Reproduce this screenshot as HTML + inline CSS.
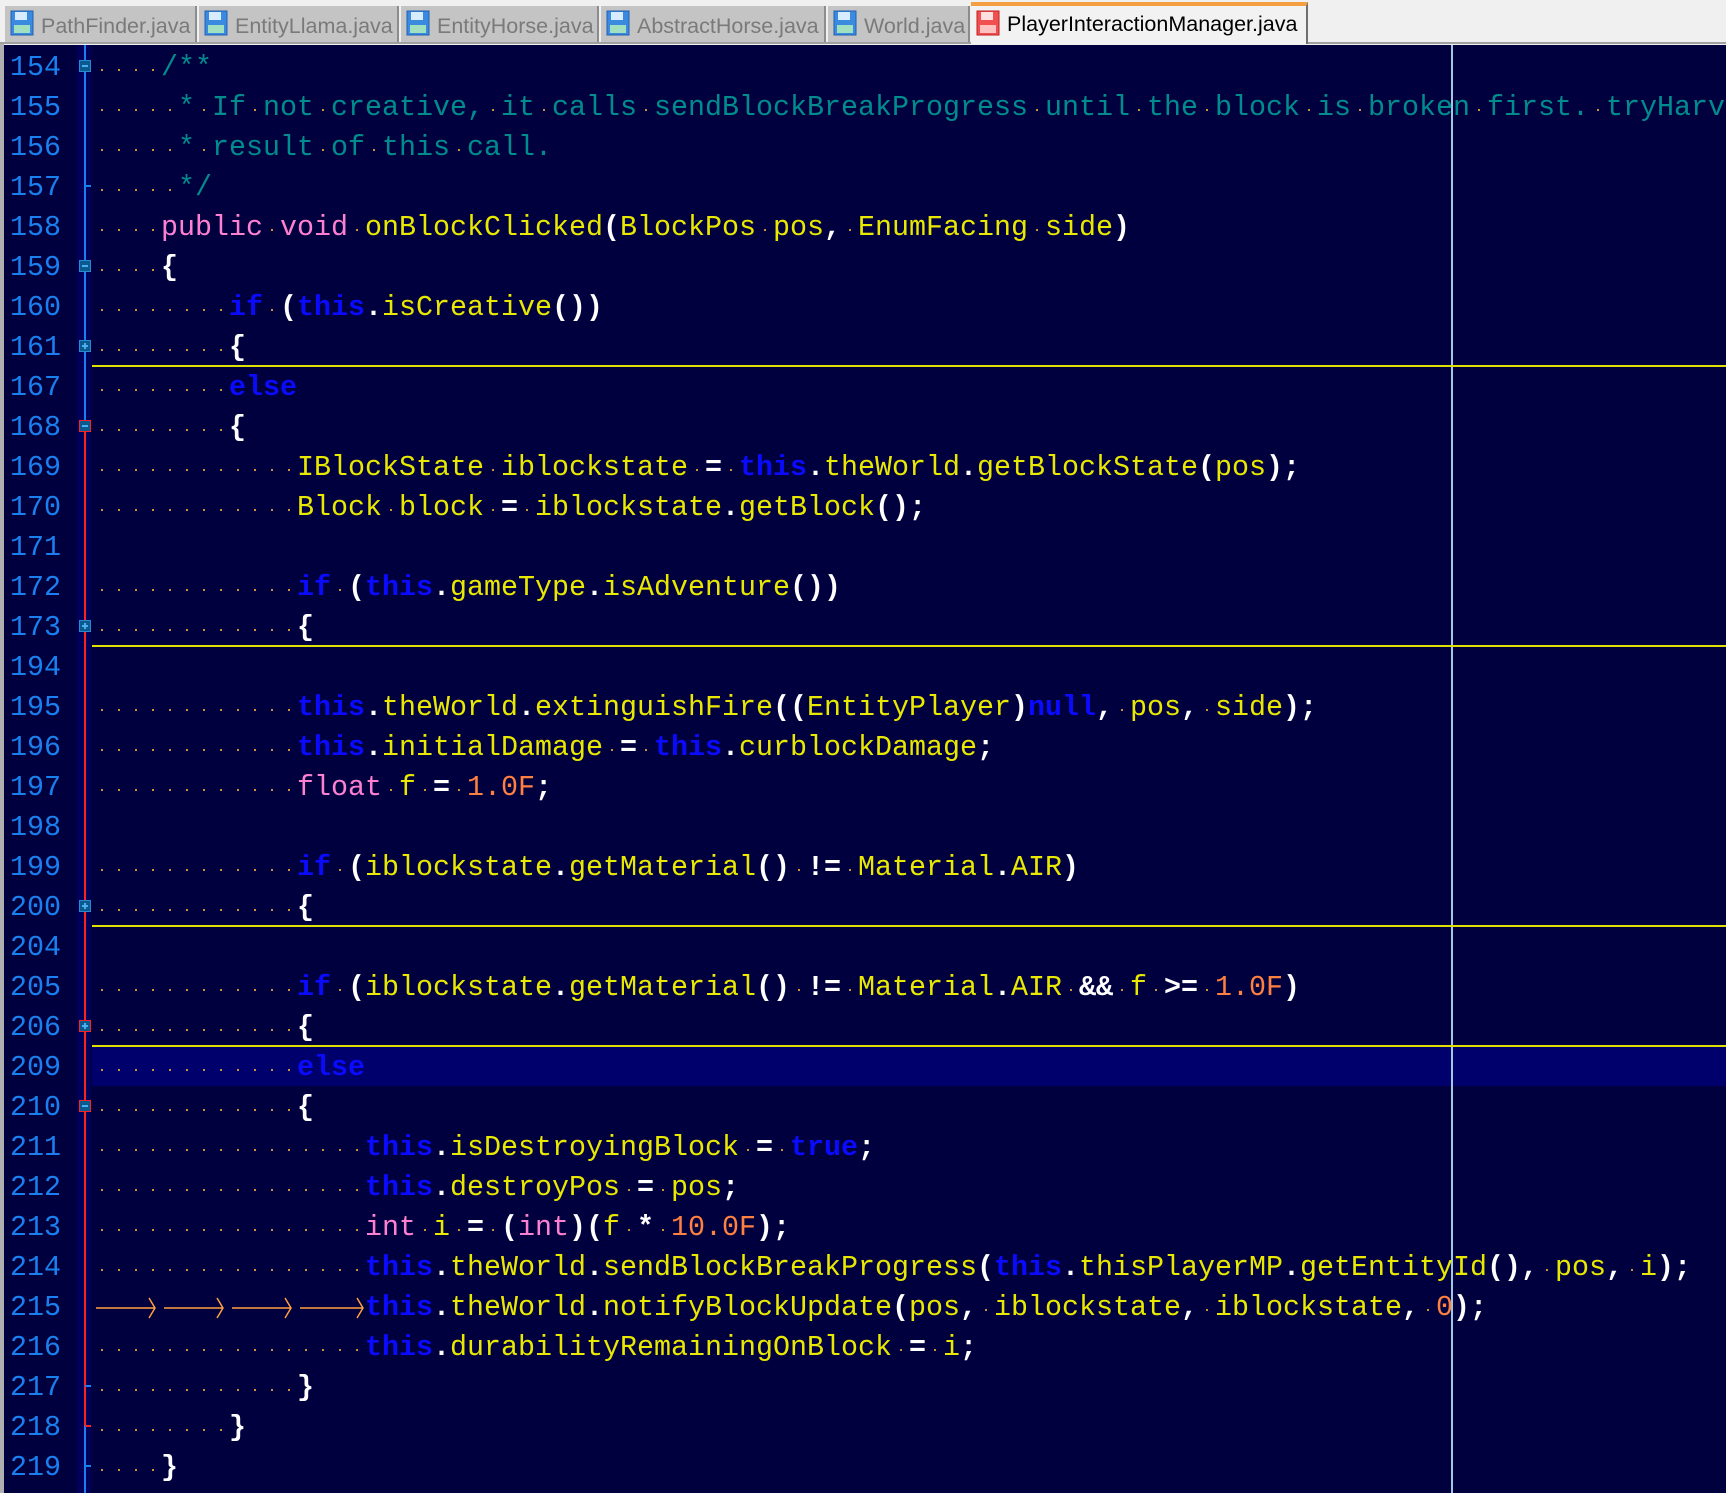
<!DOCTYPE html>
<html><head><meta charset="utf-8"><style>
*{margin:0;padding:0;box-sizing:border-box}
body{width:1726px;height:1493px;overflow:hidden;background:#f0f0f0;position:relative;font-family:"Liberation Mono",monospace}
#tabs{position:absolute;left:0;top:0;width:1726px;height:44px;background:#f0f0f0;border-bottom:2px solid #a0a0a0}
.tab{position:absolute;top:6px;height:36px;background:#c4c4c4;border-right:2px solid #8c8c8c;font-family:"Liberation Sans",Arial,sans-serif;font-size:21.5px;color:#7a7a7a;line-height:40px;padding-left:36px;white-space:nowrap;overflow:hidden}
.tab svg{position:absolute;left:5px;top:4px}
.tab.act{top:2px;height:42px;background:#f2f2f2;color:#000;border-top:4px solid #f4a040;border-right:2px solid #707070;line-height:36px}
.tab.act svg{top:4px}
#ed{position:absolute;left:4px;top:45px;width:1722px;height:1448px;background:#00003e;overflow:hidden}
#lb{position:absolute;left:0;top:44px;width:4px;height:1449px;background:#b0b0b0}
#gut{position:absolute;left:77px;top:45px;width:14px;height:1448px;background:#00005a}
.vl{position:absolute;left:84px;width:2px}
.row{position:absolute;left:0;margin-top:2px;height:40px;width:1726px;line-height:40px;font-size:28.33px;white-space:pre;color:#e8e800}
.ln{position:absolute;left:10px;color:#1a80f0}
.code{position:absolute;left:93px;width:1633px;overflow:hidden}
u{display:inline-block;width:17px;height:10px;position:relative;text-decoration:none}
u::after{content:"";position:absolute;left:8px;top:4px;width:2px;height:2px;background:#d09040}
.k{color:#0a0aff;font-weight:bold}
.t{color:#ff80d0}
.w{color:#fff;font-weight:bold}
.c{color:#008c8c}
.n{color:#ff8040}
.sep{position:absolute;left:92px;width:1634px;height:2px;background:#e0e000}
.cur{position:absolute;left:92px;width:1634px;height:40px;background:#00006c}
.mk{position:absolute;left:79px;width:12px;height:12px;background:#0a5a90;border:1px solid #2a8ad0}
.mk.r{border-color:#ff2020}
.mk::after{content:"";position:absolute;left:2px;top:4px;width:6px;height:2px;background:#4ab0f0}
.mk.p::before{content:"";position:absolute;left:4px;top:2px;width:2px;height:6px;background:#4ab0f0}
.tk{position:absolute;left:85px;width:6px;height:2px;background:#1a80f0}
</style></head><body>
<div id="tabs">
<div class="tab" style="left:5px;width:192px"><svg width="24" height="26" viewBox="0 0 24 26"><rect x="1" y="1" width="22" height="24" fill="#3a8ae0" stroke="#2060b0"/><rect x="5" y="2" width="12" height="8" fill="#d8ecff"/><rect x="4" y="15" width="16" height="8" fill="#a0e0c0"/></svg>PathFinder.java</div>
<div class="tab" style="left:199px;width:200px"><svg width="24" height="26" viewBox="0 0 24 26"><rect x="1" y="1" width="22" height="24" fill="#3a8ae0" stroke="#2060b0"/><rect x="5" y="2" width="12" height="8" fill="#d8ecff"/><rect x="4" y="15" width="16" height="8" fill="#a0e0c0"/></svg>EntityLlama.java</div>
<div class="tab" style="left:401px;width:198px"><svg width="24" height="26" viewBox="0 0 24 26"><rect x="1" y="1" width="22" height="24" fill="#3a8ae0" stroke="#2060b0"/><rect x="5" y="2" width="12" height="8" fill="#d8ecff"/><rect x="4" y="15" width="16" height="8" fill="#a0e0c0"/></svg>EntityHorse.java</div>
<div class="tab" style="left:601px;width:225px"><svg width="24" height="26" viewBox="0 0 24 26"><rect x="1" y="1" width="22" height="24" fill="#3a8ae0" stroke="#2060b0"/><rect x="5" y="2" width="12" height="8" fill="#d8ecff"/><rect x="4" y="15" width="16" height="8" fill="#a0e0c0"/></svg>AbstractHorse.java</div>
<div class="tab" style="left:828px;width:142px"><svg width="24" height="26" viewBox="0 0 24 26"><rect x="1" y="1" width="22" height="24" fill="#3a8ae0" stroke="#2060b0"/><rect x="5" y="2" width="12" height="8" fill="#d8ecff"/><rect x="4" y="15" width="16" height="8" fill="#a0e0c0"/></svg>World.java</div>
<div class="tab act" style="left:971px;width:337px"><svg width="24" height="26" viewBox="0 0 24 26"><rect x="1" y="1" width="22" height="24" fill="#f05050" stroke="#c02020"/><rect x="5" y="2" width="12" height="8" fill="#ffe0e0"/><rect x="4" y="15" width="16" height="8" fill="#ffc0c0"/></svg>PlayerInteractionManager.java</div>
</div>
<div id="lb"></div>
<div id="ed"></div>
<div id="gut"></div>
<div class="vl" style="top:45px;height:380px;background:#1a80f0"></div>
<div class="vl" style="top:425px;height:1000px;background:#ff2020"></div>
<div class="vl" style="top:1425px;height:68px;background:#1a80f0"></div>

<div class="cur" style="top:1046px"></div>
<div style="position:absolute;left:1451px;top:45px;width:2px;height:1448px;background:#9cc8e0"></div>

<div class="sep" style="top:365px"></div>
<div class="sep" style="top:645px"></div>
<div class="sep" style="top:925px"></div>
<div class="sep" style="top:1045px"></div>

<div class="row" style="top:46px"><span class="ln">154</span><span class="code"><u></u><u></u><u></u><u></u><span class="c">/**</span></span></div>
<div class="row" style="top:86px"><span class="ln">155</span><span class="code"><u></u><u></u><u></u><u></u><u></u><span class="c">*<u></u>If<u></u>not<u></u>creative,<u></u>it<u></u>calls<u></u>sendBlockBreakProgress<u></u>until<u></u>the<u></u>block<u></u>is<u></u>broken<u></u>first.<u></u>tryHarvestBlock</span></span></div>
<div class="row" style="top:126px"><span class="ln">156</span><span class="code"><u></u><u></u><u></u><u></u><u></u><span class="c">*<u></u>result<u></u>of<u></u>this<u></u>call.</span></span></div>
<div class="row" style="top:166px"><span class="ln">157</span><span class="code"><u></u><u></u><u></u><u></u><u></u><span class="c">*/</span></span></div>
<div class="row" style="top:206px"><span class="ln">158</span><span class="code"><u></u><u></u><u></u><u></u><span class="t">public</span><u></u><span class="t">void</span><u></u>onBlockClicked<span class="w">(</span>BlockPos<u></u>pos<span class="w">,</span><u></u>EnumFacing<u></u>side<span class="w">)</span></span></div>
<div class="row" style="top:246px"><span class="ln">159</span><span class="code"><u></u><u></u><u></u><u></u><span class="w">{</span></span></div>
<div class="row" style="top:286px"><span class="ln">160</span><span class="code"><u></u><u></u><u></u><u></u><u></u><u></u><u></u><u></u><span class="k">if</span><u></u><span class="w">(</span><span class="k">this</span><span class="w">.</span>isCreative<span class="w">())</span></span></div>
<div class="row" style="top:326px"><span class="ln">161</span><span class="code"><u></u><u></u><u></u><u></u><u></u><u></u><u></u><u></u><span class="w">{</span></span></div>
<div class="row" style="top:366px"><span class="ln">167</span><span class="code"><u></u><u></u><u></u><u></u><u></u><u></u><u></u><u></u><span class="k">else</span></span></div>
<div class="row" style="top:406px"><span class="ln">168</span><span class="code"><u></u><u></u><u></u><u></u><u></u><u></u><u></u><u></u><span class="w">{</span></span></div>
<div class="row" style="top:446px"><span class="ln">169</span><span class="code"><u></u><u></u><u></u><u></u><u></u><u></u><u></u><u></u><u></u><u></u><u></u><u></u>IBlockState<u></u>iblockstate<u></u><span class="w">=</span><u></u><span class="k">this</span><span class="w">.</span>theWorld<span class="w">.</span>getBlockState<span class="w">(</span>pos<span class="w">);</span></span></div>
<div class="row" style="top:486px"><span class="ln">170</span><span class="code"><u></u><u></u><u></u><u></u><u></u><u></u><u></u><u></u><u></u><u></u><u></u><u></u>Block<u></u>block<u></u><span class="w">=</span><u></u>iblockstate<span class="w">.</span>getBlock<span class="w">();</span></span></div>
<div class="row" style="top:526px"><span class="ln">171</span></div>
<div class="row" style="top:566px"><span class="ln">172</span><span class="code"><u></u><u></u><u></u><u></u><u></u><u></u><u></u><u></u><u></u><u></u><u></u><u></u><span class="k">if</span><u></u><span class="w">(</span><span class="k">this</span><span class="w">.</span>gameType<span class="w">.</span>isAdventure<span class="w">())</span></span></div>
<div class="row" style="top:606px"><span class="ln">173</span><span class="code"><u></u><u></u><u></u><u></u><u></u><u></u><u></u><u></u><u></u><u></u><u></u><u></u><span class="w">{</span></span></div>
<div class="row" style="top:646px"><span class="ln">194</span></div>
<div class="row" style="top:686px"><span class="ln">195</span><span class="code"><u></u><u></u><u></u><u></u><u></u><u></u><u></u><u></u><u></u><u></u><u></u><u></u><span class="k">this</span><span class="w">.</span>theWorld<span class="w">.</span>extinguishFire<span class="w">((</span>EntityPlayer<span class="w">)</span><span class="k">null</span><span class="w">,</span><u></u>pos<span class="w">,</span><u></u>side<span class="w">);</span></span></div>
<div class="row" style="top:726px"><span class="ln">196</span><span class="code"><u></u><u></u><u></u><u></u><u></u><u></u><u></u><u></u><u></u><u></u><u></u><u></u><span class="k">this</span><span class="w">.</span>initialDamage<u></u><span class="w">=</span><u></u><span class="k">this</span><span class="w">.</span>curblockDamage<span class="w">;</span></span></div>
<div class="row" style="top:766px"><span class="ln">197</span><span class="code"><u></u><u></u><u></u><u></u><u></u><u></u><u></u><u></u><u></u><u></u><u></u><u></u><span class="t">float</span><u></u>f<u></u><span class="w">=</span><u></u><span class="n">1.0F</span><span class="w">;</span></span></div>
<div class="row" style="top:806px"><span class="ln">198</span></div>
<div class="row" style="top:846px"><span class="ln">199</span><span class="code"><u></u><u></u><u></u><u></u><u></u><u></u><u></u><u></u><u></u><u></u><u></u><u></u><span class="k">if</span><u></u><span class="w">(</span>iblockstate<span class="w">.</span>getMaterial<span class="w">()</span><u></u><span class="w">!=</span><u></u>Material<span class="w">.</span>AIR<span class="w">)</span></span></div>
<div class="row" style="top:886px"><span class="ln">200</span><span class="code"><u></u><u></u><u></u><u></u><u></u><u></u><u></u><u></u><u></u><u></u><u></u><u></u><span class="w">{</span></span></div>
<div class="row" style="top:926px"><span class="ln">204</span></div>
<div class="row" style="top:966px"><span class="ln">205</span><span class="code"><u></u><u></u><u></u><u></u><u></u><u></u><u></u><u></u><u></u><u></u><u></u><u></u><span class="k">if</span><u></u><span class="w">(</span>iblockstate<span class="w">.</span>getMaterial<span class="w">()</span><u></u><span class="w">!=</span><u></u>Material<span class="w">.</span>AIR<u></u><span class="w">&amp;&amp;</span><u></u>f<u></u><span class="w">&gt;=</span><u></u><span class="n">1.0F</span><span class="w">)</span></span></div>
<div class="row" style="top:1006px"><span class="ln">206</span><span class="code"><u></u><u></u><u></u><u></u><u></u><u></u><u></u><u></u><u></u><u></u><u></u><u></u><span class="w">{</span></span></div>
<div class="row" style="top:1046px"><span class="ln">209</span><span class="code"><u></u><u></u><u></u><u></u><u></u><u></u><u></u><u></u><u></u><u></u><u></u><u></u><span class="k">else</span></span></div>
<div class="row" style="top:1086px"><span class="ln">210</span><span class="code"><u></u><u></u><u></u><u></u><u></u><u></u><u></u><u></u><u></u><u></u><u></u><u></u><span class="w">{</span></span></div>
<div class="row" style="top:1126px"><span class="ln">211</span><span class="code"><u></u><u></u><u></u><u></u><u></u><u></u><u></u><u></u><u></u><u></u><u></u><u></u><u></u><u></u><u></u><u></u><span class="k">this</span><span class="w">.</span>isDestroyingBlock<u></u><span class="w">=</span><u></u><span class="k">true</span><span class="w">;</span></span></div>
<div class="row" style="top:1166px"><span class="ln">212</span><span class="code"><u></u><u></u><u></u><u></u><u></u><u></u><u></u><u></u><u></u><u></u><u></u><u></u><u></u><u></u><u></u><u></u><span class="k">this</span><span class="w">.</span>destroyPos<u></u><span class="w">=</span><u></u>pos<span class="w">;</span></span></div>
<div class="row" style="top:1206px"><span class="ln">213</span><span class="code"><u></u><u></u><u></u><u></u><u></u><u></u><u></u><u></u><u></u><u></u><u></u><u></u><u></u><u></u><u></u><u></u><span class="t">int</span><u></u>i<u></u><span class="w">=</span><u></u><span class="w">(</span><span class="t">int</span><span class="w">)(</span>f<u></u><span class="w">*</span><u></u><span class="n">10.0F</span><span class="w">);</span></span></div>
<div class="row" style="top:1246px"><span class="ln">214</span><span class="code"><u></u><u></u><u></u><u></u><u></u><u></u><u></u><u></u><u></u><u></u><u></u><u></u><u></u><u></u><u></u><u></u><span class="k">this</span><span class="w">.</span>theWorld<span class="w">.</span>sendBlockBreakProgress<span class="w">(</span><span class="k">this</span><span class="w">.</span>thisPlayerMP<span class="w">.</span>getEntityId<span class="w">(),</span><u></u>pos<span class="w">,</span><u></u>i<span class="w">);</span></span></div>
<div class="row" style="top:1286px"><span class="ln">215</span><span class="code"><svg width="272" height="40" style="vertical-align:top"><g stroke="#ffa040" stroke-width="1.5" fill="none"><path d="M3 20H62M56 10L62 20L56 30"/><path d="M71 20H130M124 10L130 20L124 30"/><path d="M139 20H198M192 10L198 20L192 30"/><path d="M207 20H270M264 10L270 20L264 30"/></g></svg><span class="k">this</span><span class="w">.</span>theWorld<span class="w">.</span>notifyBlockUpdate<span class="w">(</span>pos<span class="w">,</span><u></u>iblockstate<span class="w">,</span><u></u>iblockstate<span class="w">,</span><u></u><span class="n">0</span><span class="w">);</span></span></div>
<div class="row" style="top:1326px"><span class="ln">216</span><span class="code"><u></u><u></u><u></u><u></u><u></u><u></u><u></u><u></u><u></u><u></u><u></u><u></u><u></u><u></u><u></u><u></u><span class="k">this</span><span class="w">.</span>durabilityRemainingOnBlock<u></u><span class="w">=</span><u></u>i<span class="w">;</span></span></div>
<div class="row" style="top:1366px"><span class="ln">217</span><span class="code"><u></u><u></u><u></u><u></u><u></u><u></u><u></u><u></u><u></u><u></u><u></u><u></u><span class="w">}</span></span></div>
<div class="row" style="top:1406px"><span class="ln">218</span><span class="code"><u></u><u></u><u></u><u></u><u></u><u></u><u></u><u></u><span class="w">}</span></span></div>
<div class="row" style="top:1446px"><span class="ln">219</span><span class="code"><u></u><u></u><u></u><u></u><span class="w">}</span></span></div>

<div class="mk" style="top:60px"></div>
<div class="mk" style="top:260px"></div>
<div class="mk p" style="top:340px"></div>
<div class="mk r" style="top:420px"></div>
<div class="mk p" style="top:620px"></div>
<div class="mk p" style="top:900px"></div>
<div class="mk p r" style="top:1020px"></div>
<div class="mk r" style="top:1100px"></div>
<div class="tk" style="top:185px"></div>
<div class="tk" style="top:1385px"></div>
<div class="tk" style="top:1425px;background:#ff2020"></div>
<div class="tk" style="top:1465px"></div>
</body></html>
